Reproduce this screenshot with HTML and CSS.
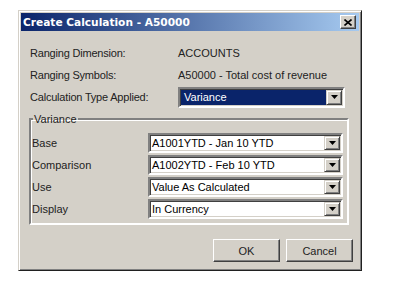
FILE: index.html
```html
<!DOCTYPE html>
<html lang="en">
<head>
  <meta charset="UTF-8">
  <meta name="viewport" content="width=device-width, initial-scale=1.0">
  <title>Create Calculation</title>
  <link rel="stylesheet" href="styles.css">
</head>
<body>
<div class="dialog">
  <div class="titlebar">
    <span class="title">Create Calculation - A50000</span>
    <div class="close-btn">
      <svg width="8" height="7" viewBox="0 0 8 7"><path d="M0.5 0.5 L7.5 6.5 M7.5 0.5 L0.5 6.5" stroke="#000" stroke-width="1.6"/></svg>
    </div>
  </div>

  <div class="content">
    <div class="info-grid">
      <label>Ranging Dimension:</label>
      <span>ACCOUNTS</span>
      <label>Ranging Symbols:</label>
      <span>A50000 - Total cost of revenue</span>
      <label>Calculation Type Applied:</label>
      <div class="combo selected">
        <span class="combo-text">Variance</span>
        <span class="combo-btn"><svg width="7" height="4" viewBox="0 0 7 4"><path d="M0 0 H7 L3.5 4 Z" fill="#000"/></svg></span>
      </div>
    </div>

    <fieldset class="group">
      <legend>Variance</legend>
      <div class="group-grid">
        <label>Base</label>
        <div class="combo">
          <span class="combo-text">A1001YTD - Jan 10 YTD</span>
          <span class="combo-btn"><svg width="7" height="4" viewBox="0 0 7 4"><path d="M0 0 H7 L3.5 4 Z" fill="#000"/></svg></span>
        </div>
        <label>Comparison</label>
        <div class="combo">
          <span class="combo-text">A1002YTD - Feb 10 YTD</span>
          <span class="combo-btn"><svg width="7" height="4" viewBox="0 0 7 4"><path d="M0 0 H7 L3.5 4 Z" fill="#000"/></svg></span>
        </div>
        <label>Use</label>
        <div class="combo">
          <span class="combo-text">Value As Calculated</span>
          <span class="combo-btn"><svg width="7" height="4" viewBox="0 0 7 4"><path d="M0 0 H7 L3.5 4 Z" fill="#000"/></svg></span>
        </div>
        <label>Display</label>
        <div class="combo">
          <span class="combo-text">In Currency</span>
          <span class="combo-btn"><svg width="7" height="4" viewBox="0 0 7 4"><path d="M0 0 H7 L3.5 4 Z" fill="#000"/></svg></span>
        </div>
      </div>
    </fieldset>

    <div class="buttons">
      <button class="btn">OK</button>
      <button class="btn">Cancel</button>
    </div>
  </div>
</div>
</body>
</html>
```

FILE: styles.css
```css
body { margin: 0; background: #fff; font-family: "Liberation Sans", Arial, sans-serif; font-size: 11px; color: #222; }
.dialog { margin: 10px 0 0 18px; width: 338px; background: #d4d0c8; padding: 2px; border: 1px solid; border-color: #d4d0c8 #202020 #202020 #d4d0c8; box-shadow: inset 1px 1px #fff, inset -1px -1px #808080; }
.titlebar { height: 18px; display: flex; align-items: center; justify-content: space-between; padding: 0 3px 0 2px; background: linear-gradient(to right, #0a246a, #a6caf0); }
.title { color: #fff; font-family: "DejaVu Sans", Verdana, sans-serif; font-weight: bold; font-size: 10.6px; }
.close-btn { width: 16px; height: 14px; box-sizing: border-box; background: #d4d0c8; display: flex; align-items: center; justify-content: center; border: 1px solid; border-color: #fff #404040 #404040 #fff; box-shadow: inset -1px -1px #808080; }
.content { padding: 11px 6px 6px 9px; }
.info-grid { display: grid; grid-template-columns: 148px 167px; grid-auto-rows: 22px; align-items: center; }
.info-grid label { letter-spacing: -0.2px; }
.combo { height: 21px; box-sizing: border-box; display: flex; align-items: stretch; background: #fff; border: 2px solid; border-color: #808080 #fff #fff #808080; box-shadow: inset 1px 1px #404040, inset -1px -1px #d4d0c8; padding: 1px; }
.combo-text { flex: 1; display: flex; align-items: center; padding-left: 1px; color: #000; white-space: nowrap; overflow: hidden; }
.combo.selected .combo-text { background: #0a246a; color: #fff; padding-left: 3px; }
.combo-btn { width: 16px; box-sizing: border-box; background: #d4d0c8; display: flex; align-items: center; justify-content: center; border: 1px solid; border-color: #d4d0c8 #404040 #404040 #d4d0c8; box-shadow: inset 1px 1px #fff, inset -1px -1px #808080; }
.group { margin: 5px 10px 0 -1px; padding: 8px 4px 4px 1px; border: 2px solid; border-color: #808080 #fff #fff #808080; box-shadow: inset 1px 1px #fff; }
.group legend { padding: 0 1px; margin-left: 1px; font-size: 11px; color: #222; }
.group-grid { display: grid; grid-template-columns: 116px 195px; grid-auto-rows: 20px; row-gap: 2px; align-items: center; }
.group-grid .combo { height: 20px; }
.buttons { display: flex; justify-content: flex-end; gap: 6px; margin-top: 14px; }
.btn { width: 67px; height: 23px; font-family: inherit; font-size: 11px; color: #222; background: #d4d0c8; border: 1px solid; border-color: #fff #404040 #404040 #fff; box-shadow: inset -1px -1px #808080; padding: 0; }
```
